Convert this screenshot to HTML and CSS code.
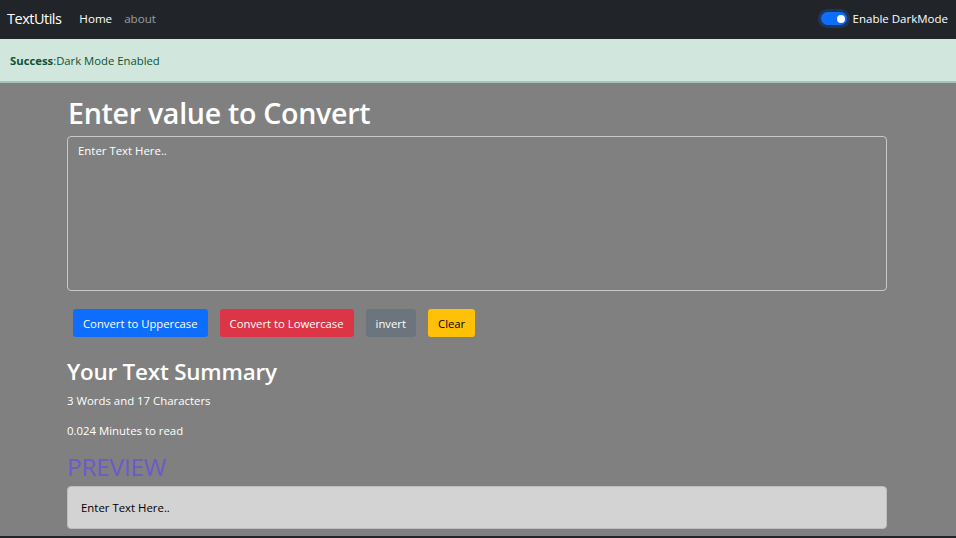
FILE: index.html
```html
<!DOCTYPE html>
<html lang="en">
<head>
<meta charset="utf-8">
<title>TextUtils</title>
<link rel="stylesheet" href="styles.css">
</head>
<body>
<nav class="navbar">
  <a class="brand" href="#">TextUtils</a>
  <ul class="nav-links">
    <li><a class="active" href="#">Home</a></li>
    <li><a href="#">about</a></li>
  </ul>
  <label class="switch">
    <span class="toggle"><span class="knob"></span></span>
    <span class="switch-label">Enable DarkMode</span>
  </label>
</nav>
<div class="alert"><strong>Success</strong>:Dark Mode Enabled</div>
<main class="container">
  <h1 class="title">Enter value to Convert</h1>
  <div class="textarea">Enter Text Here..</div>
  <div class="buttons">
    <button class="btn btn-primary">Convert to Uppercase</button>
    <button class="btn btn-danger">Convert to Lowercase</button>
    <button class="btn btn-secondary">invert</button>
    <button class="btn btn-warning">Clear</button>
  </div>
  <h2 class="summary">Your Text Summary</h2>
  <p class="line">3 Words and 17 Characters</p>
  <p class="line">0.024 Minutes to read</p>
  <h2 class="preview-title">PREVIEW</h2>
  <div class="preview">Enter Text Here..</div>
</main>
</body>
</html>
```
FILE: styles.css
```css
* { box-sizing: border-box; }
html, body { margin: 0; padding: 0; }
body {
  font-family: "Open Sans", "Noto Sans", sans-serif;
  font-size: 11.4px;
  background: #808080;
  color: #fff;
  height: 538px;
  overflow: hidden;
  border-bottom: 2px solid #212529;
}
.navbar {
  height: 39px;
  background: #212529;
  display: flex;
  align-items: center;
  padding: 0 8px 2px 7px;
}
.brand {
  color: #fff;
  text-decoration: none;
  font-size: 14.5px;
  letter-spacing: -0.5px;
  margin-right: 18px;
}
.nav-links {
  list-style: none;
  display: flex;
  gap: 12px;
  margin: 0;
  padding: 0;
  flex: 1;
}
.nav-links a {
  color: rgba(255,255,255,0.55);
  text-decoration: none;
  font-size: 11.6px;
}
.nav-links a.active { color: #fff; }
.switch { display: flex; align-items: center; gap: 6px; }
.toggle {
  width: 26px;
  height: 13px;
  border-radius: 7px;
  background: #0d6efd;
  display: flex;
  align-items: center;
  justify-content: flex-end;
  padding-right: 2px;
  box-shadow: 0 0 0 3px rgba(13,110,253,0.25);
}
.knob { width: 8px; height: 8px; border-radius: 50%; background: #fff; }
.switch-label { font-size: 11.5px; color: #fff; }
.alert {
  height: 44px;
  background: #d1e7dd;
  color: #0f5132;
  border-bottom: 2px solid #a8c3b6;
  display: flex;
  align-items: center;
  padding: 0 10px;
  font-size: 11.3px;
}
.alert strong { font-weight: 700; }
.container {
  width: 820px;
  margin-left: 67px;
}
.title {
  font-size: 28.6px;
  font-weight: 600;
  margin: 13px 0 6px 1px;
  line-height: 34px;
  letter-spacing: -0.3px;
}
.textarea {
  height: 155px;
  border: 1px solid #c8c8c8;
  border-radius: 4px;
  padding: 6px 10px;
  font-size: 11.4px;
  color: #fff;
}
.buttons {
  display: flex;
  gap: 12px;
  margin: 18px 0 0 6px;
}
.btn {
  font-family: inherit;
  font-size: 11.3px;
  height: 28px;
  padding: 0 10px;
  border: none;
  border-radius: 3px;
  color: #fff;
}
.btn-primary { background: #0d6efd; }
.btn-danger { background: #dc3545; }
.btn-secondary { background: #6c757d; }
.btn-warning { background: #ffc107; color: #000; }
.summary {
  font-size: 22.4px;
  font-weight: 600;
  margin: 20px 0 6px 0;
  line-height: 30px;
  letter-spacing: -0.2px;
}
.line { margin: 0 0 14px; font-size: 11.4px; line-height: 16px; }
.preview-title {
  color: #6a5acd;
  font-size: 24.5px;
  font-weight: 500;
  margin: 1px 0 5px 0;
  line-height: 28px;
  letter-spacing: -0.3px;
}
.preview {
  height: 43px;
  background: #d3d3d3;
  color: #000;
  border: 1px solid #bdbdbd;
  border-radius: 4px;
  padding: 0 13px;
  display: flex;
  align-items: center;
  font-size: 11.4px;
}
```
